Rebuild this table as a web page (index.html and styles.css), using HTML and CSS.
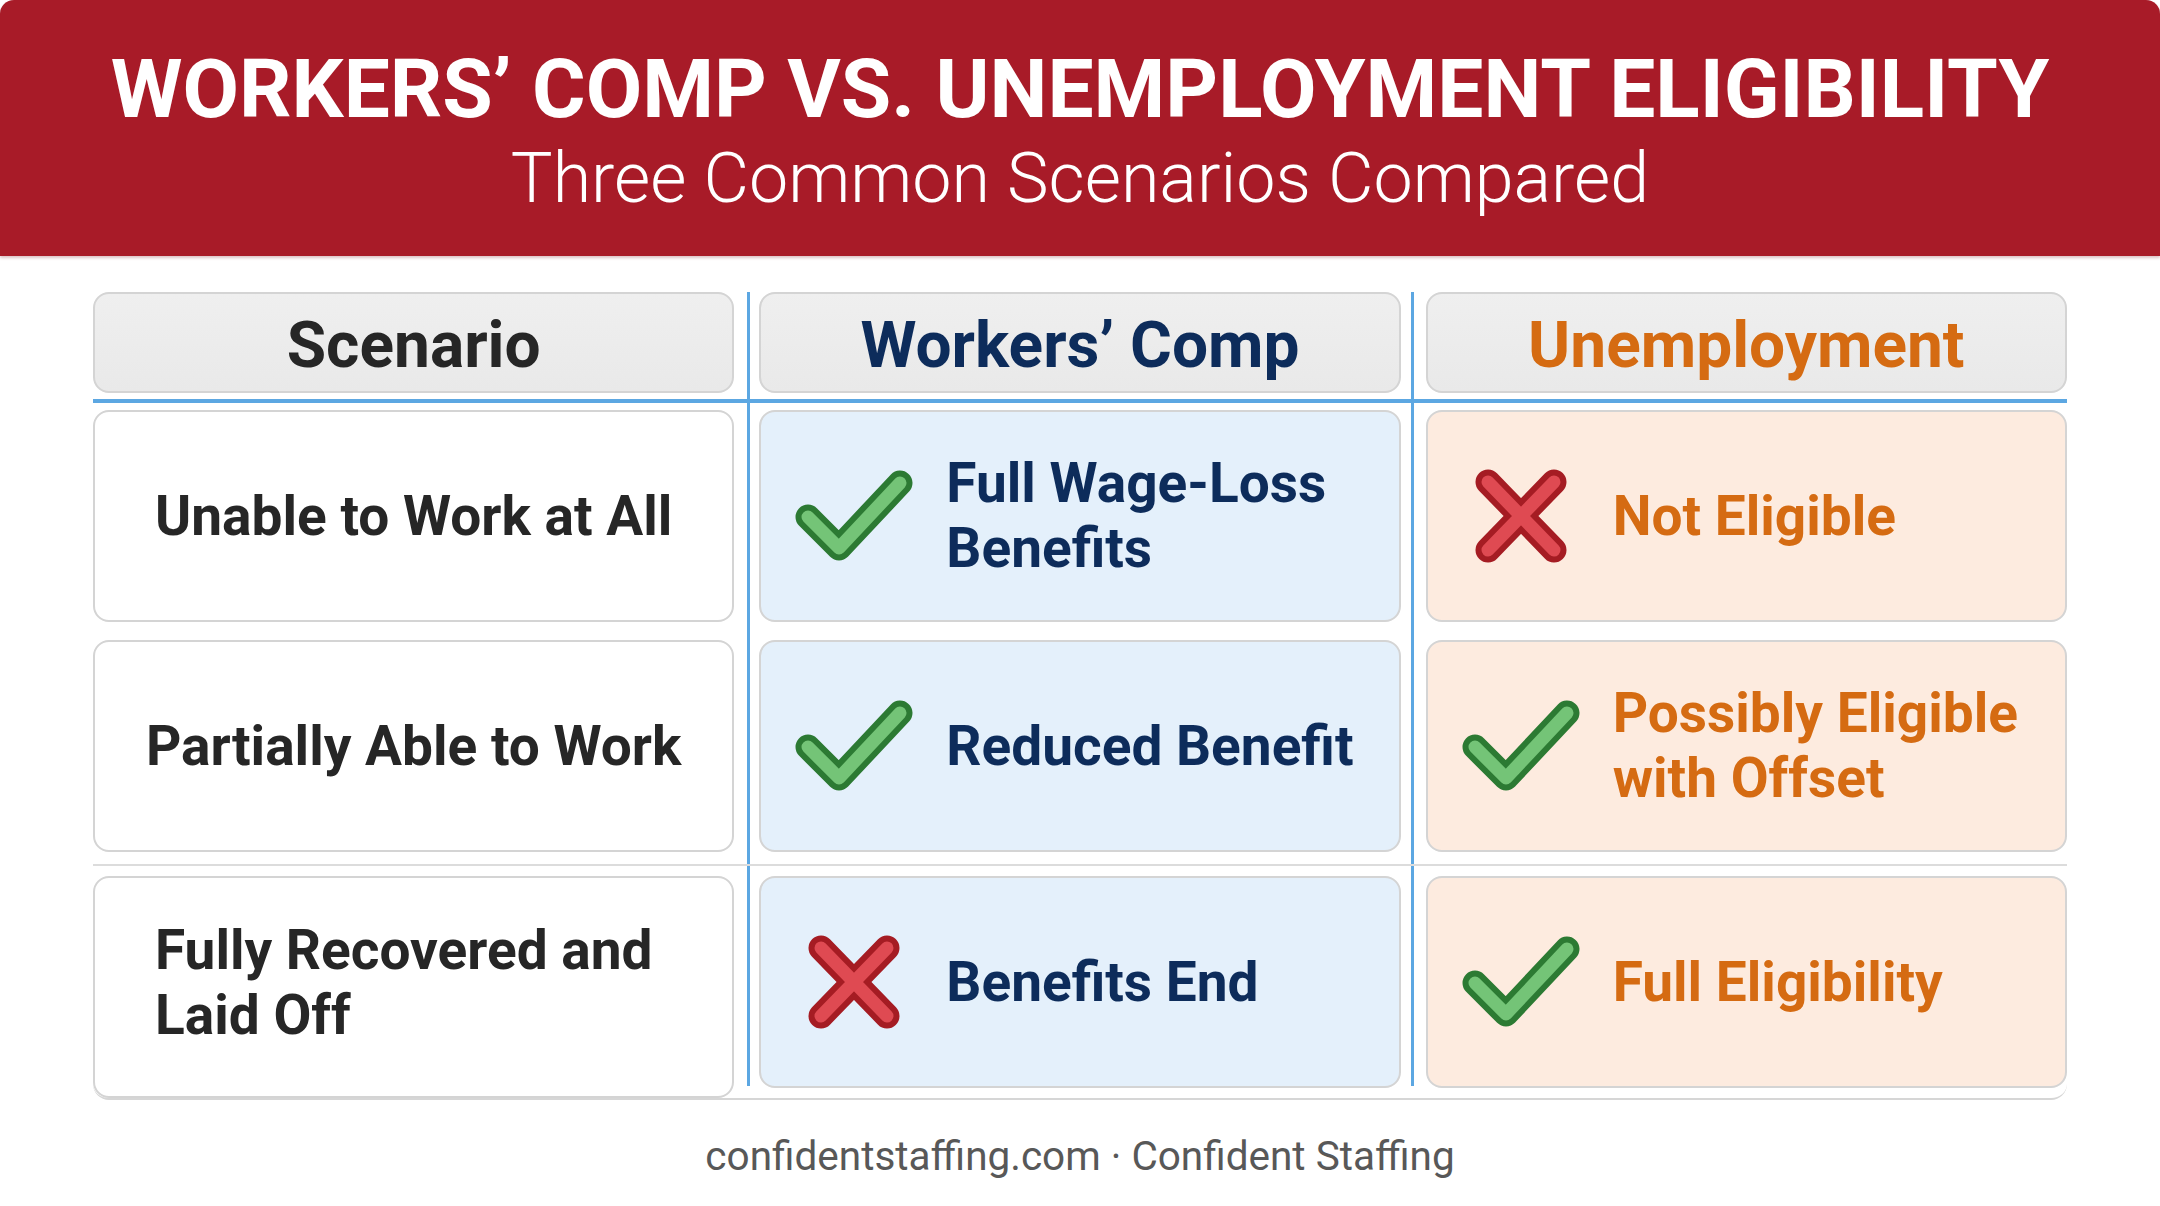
FILE: index.html
```html
<!DOCTYPE html>
<html lang="en">
<head>
<meta charset="utf-8">
<title>Workers' Comp vs. Unemployment Eligibility</title>
<link rel="stylesheet" href="styles.css">
</head>
<body>
<div class="page">
  <header class="banner">
    <h1 class="title">WORKERS’ COMP VS. UNEMPLOYMENT ELIGIBILITY</h1>
    <p class="subtitle">Three Common Scenarios Compared</p>
  </header>

  <main class="table">
    <div class="row head-row">
      <div class="cell head"><span class="head-text dark">Scenario</span></div>
      <div class="cell head"><span class="head-text navy">Workers’ Comp</span></div>
      <div class="cell head"><span class="head-text orange">Unemployment</span></div>
    </div>
    <div class="hline"></div>

    <div class="row body-row">
      <div class="cell scen">Unable to Work at All</div>
      <div class="cell wc">
        <span class="icon-slot"><svg class="check" viewBox="0 0 116 90"><path class="outer" d="M12 46 L43 77 L104 12"/><path class="inner-g" d="M12 46 L43 77 L104 12"/></svg></span>
        <span class="val navy">Full Wage-Loss<br>Benefits</span>
      </div>
      <div class="cell ue">
        <span class="icon-slot"><svg class="cross" viewBox="0 0 94 96"><path class="outer-r" d="M14 14 L80 82 M80 14 L14 82"/><path class="inner-r" d="M14 14 L80 82 M80 14 L14 82"/></svg></span>
        <span class="val orange">Not Eligible</span>
      </div>
    </div>

    <div class="row body-row gap-top">
      <div class="cell scen">Partially Able to Work</div>
      <div class="cell wc">
        <span class="icon-slot"><svg class="check" viewBox="0 0 116 90"><path class="outer" d="M12 46 L43 77 L104 12"/><path class="inner-g" d="M12 46 L43 77 L104 12"/></svg></span>
        <span class="val navy">Reduced Benefit</span>
      </div>
      <div class="cell ue">
        <span class="icon-slot"><svg class="check" viewBox="0 0 116 90"><path class="outer" d="M12 46 L43 77 L104 12"/><path class="inner-g" d="M12 46 L43 77 L104 12"/></svg></span>
        <span class="val orange">Possibly Eligible<br>with Offset</span>
      </div>
    </div>

    <div class="divider"></div>

    <div class="row body-row last-row">
      <div class="cell scen left tall">Fully Recovered and<br>Laid Off</div>
      <div class="cell wc">
        <span class="icon-slot"><svg class="cross" viewBox="0 0 94 96"><path class="outer-r" d="M14 14 L80 82 M80 14 L14 82"/><path class="inner-r" d="M14 14 L80 82 M80 14 L14 82"/></svg></span>
        <span class="val navy">Benefits End</span>
      </div>
      <div class="cell ue">
        <span class="icon-slot"><svg class="check" viewBox="0 0 116 90"><path class="outer" d="M12 46 L43 77 L104 12"/><path class="inner-g" d="M12 46 L43 77 L104 12"/></svg></span>
        <span class="val orange">Full Eligibility</span>
      </div>
    </div>
  </main>

  <footer class="footer">confidentstaffing.com · Confident Staffing</footer>
</div>
</body>
</html>
```

FILE: styles.css
```css
* { box-sizing: border-box; }
html, body {
  margin: 0;
  padding: 0;
  background: #ffffff;
}
body {
  font-family: Roboto, "Liberation Sans", Arial, sans-serif;
  width: 2160px;
  height: 1206px;
  overflow: hidden;
}
.page {
  display: flex;
  flex-direction: column;
  align-items: center;
}
.banner {
  width: 2160px;
  height: 256px;
  background: #a81b28;
  border-radius: 14px 14px 0 0;
  box-shadow: 0 2px 3px rgba(120, 20, 30, 0.25);
  display: flex;
  flex-direction: column;
  align-items: center;
  padding-top: 48px;
  color: #ffffff;
}
.title {
  margin: 0;
  font-size: 82px;
  line-height: 1;
  font-weight: 700;
  letter-spacing: 0;
  white-space: nowrap;
}
.subtitle {
  margin: 13px 0 0;
  font-size: 70px;
  line-height: 1;
  font-weight: 300;
  white-space: nowrap;
}

.table {
  width: 1974px;
  margin-top: 36px;
  border-bottom: 2px solid #d6d6d6;
  border-radius: 0 0 16px 16px;
  background-image:
    linear-gradient(#5ca7e2, #5ca7e2),
    linear-gradient(#5ca7e2, #5ca7e2);
  background-repeat: no-repeat;
  background-size: 3px calc(100% - 12px), 3px calc(100% - 12px);
  background-position: 654px 0, 1318px 0;
}
.row {
  display: grid;
  grid-template-columns: 1fr 1fr 1fr;
  column-gap: 25px;
}
.head-row { height: 101px; }
.hline {
  height: 4px;
  background: #5ca7e2;
  margin: 6px 0 7px;
}
.body-row {
  height: 212px;
  align-items: start;
}
.gap-top { margin-top: 18px; }
.last-row { height: 222px; }
.divider {
  height: 2px;
  background: #dcdcdc;
  margin: 12px 0 10px;
}

.cell {
  border: 2px solid #d4d4d4;
  border-radius: 16px;
  height: 100%;
}
.body-row .cell { height: 212px; }
.body-row .cell.tall { height: 222px; }
.head {
  background: linear-gradient(#efefef, #e9e9e9);
  display: flex;
  align-items: center;
  justify-content: center;
  padding-top: 5px;
}
.head-text {
  font-size: 64px;
  font-weight: 700;
}
.dark { color: #262626; }
.navy { color: #0d2c5b; }
.orange { color: #d56b12; }

.scen {
  background: #ffffff;
  display: flex;
  align-items: center;
  justify-content: center;
  text-align: center;
  font-size: 55px;
  font-weight: 700;
  color: #262626;
  line-height: 1.18;
}
.scen.left {
  justify-content: flex-start;
  text-align: left;
  padding-left: 60px;
  padding-bottom: 8px;
}
.wc, .ue {
  display: flex;
  align-items: center;
  padding-left: 35px;
  gap: 34px;
}
.wc { background: #e4f0fb; }
.ue { background: #fdebdf; }
.icon-slot {
  width: 116px;
  height: 96px;
  display: flex;
  align-items: center;
  justify-content: center;
  flex: none;
}
.check { width: 116px; height: 90px; overflow: visible; }
.cross { width: 94px; height: 96px; overflow: visible; }
.check path, .cross path {
  fill: none;
  stroke-linecap: round;
  stroke-linejoin: round;
}
.outer { stroke: #2c7a33; stroke-width: 25; }
.inner-g { stroke: #74c477; stroke-width: 13; }
.outer-r { stroke: #a51c23; stroke-width: 25; }
.inner-r { stroke: #df4a52; stroke-width: 13; }
.val {
  font-size: 55px;
  font-weight: 700;
  line-height: 1.18;
}

.footer {
  margin-top: 33px;
  font-size: 40.5px;
  color: #585858;
  line-height: 1.171;
}
```
